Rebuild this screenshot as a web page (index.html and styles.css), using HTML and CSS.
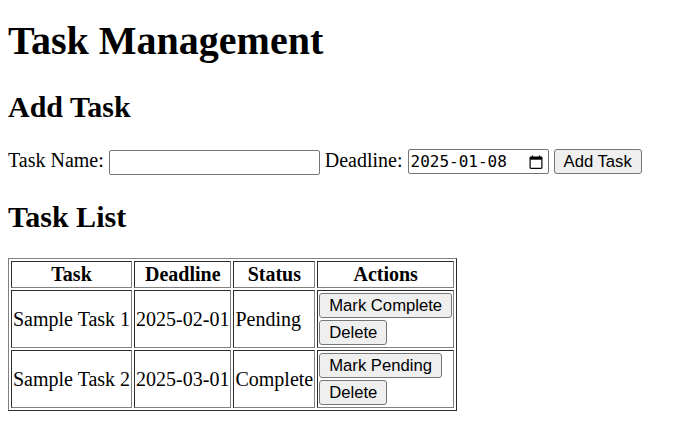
FILE: index.html
```html
<!DOCTYPE html>
<html>
<head>
<meta charset="utf-8">
<title>Task Management</title>
<link rel="stylesheet" href="styles.css">
</head>
<body class="page">
<h1 class="title">Task Management</h1>
<h2 class="section">Add Task</h2>
<form class="task-form">
<label class="lbl">Task Name: <input type="text" class="text-input"></label>
<label class="lbl">Deadline: <span class="date-field"><span class="date-text">2025-01-08</span><svg class="cal-icon" width="14" height="14" viewBox="0 0 14 14"><path d="M3.5 0.5v2M10.5 0.5v2" stroke="#000" stroke-width="1.2" fill="none"/><rect x="1.1" y="2.1" width="11.8" height="11.3" rx="0.8" stroke="#000" stroke-width="1.2" fill="none"/><rect x="1.1" y="2.1" width="11.8" height="2.6" fill="#000"/></svg></span></label>
<button type="button" class="btn">Add Task</button>
</form>
<h2 class="section">Task List</h2>
<table class="task-table">
<thead>
<tr><th class="cell">Task</th><th class="cell">Deadline</th><th class="cell">Status</th><th class="cell">Actions</th></tr>
</thead>
<tbody>
<tr><td class="cell">Sample Task 1</td><td class="cell">2025-02-01</td><td class="cell">Pending</td><td class="cell"><button class="btn cell-btn">Mark Complete</button><br><button class="btn cell-btn">Delete</button></td></tr>
<tr><td class="cell">Sample Task 2</td><td class="cell">2025-03-01</td><td class="cell">Complete</td><td class="cell"><button class="btn cell-btn">Mark Pending</button><br><button class="btn cell-btn">Delete</button></td></tr>
</tbody>
</table>
</body>
</html>
```
FILE: styles.css
```css
.page {
  margin: 8px;
  font-family: "Liberation Serif", "Times New Roman", serif;
  font-size: 20px;
  color: #000;
  background: #fff;
}
.title { font-size: 40px; margin: 8.5px 0 26.8px; }
.section { font-size: 30px; margin: 24.9px 0; }
.task-form { margin: 0; }
.text-input {
  box-sizing: border-box;
  width: 211px;
  height: 25px;
  margin: 0;
  padding: 1px 2px;
  border: 1px solid #767676;
  border-radius: 2px;
  font-family: "Liberation Sans", Arial, sans-serif;
  font-size: 16.667px;
  vertical-align: baseline;
}
.date-field {
  box-sizing: border-box;
  display: inline-flex;
  align-items: center;
  justify-content: space-between;
  width: 141px;
  height: 25px;
  padding: 0 5px 0 2px;
  border: 1px solid #767676;
  border-radius: 2px;
  font-family: "DejaVu Sans Mono", "Liberation Mono", monospace;
  font-size: 16px;
}
.date-text { line-height: 1; padding-top: 1px; }
.cal-icon { display: block; }
.btn {
  box-sizing: border-box;
  height: 25px;
  margin: 0;
  padding: 0 9px;
  border: 1px solid #767676;
  border-radius: 3px;
  background: #efefef;
  color: #000;
  font-family: "Liberation Sans", Arial, sans-serif;
  font-size: 16.667px;
  line-height: 23px;
}
.cell-btn { margin: 1px 0; }
.task-table {
  border: 1px outset grey;
  border-spacing: 2px;
}
.cell {
  border: 1px inset grey;
  padding: 1px;
}
```
